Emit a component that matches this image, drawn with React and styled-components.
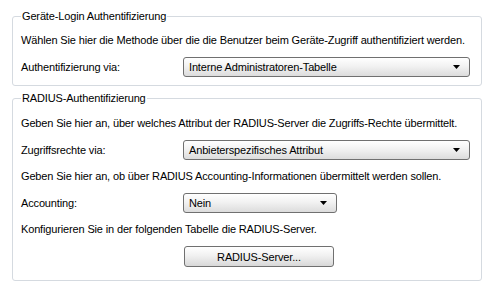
import React from "react";
import styled, { createGlobalStyle } from "styled-components";

const GlobalStyle = createGlobalStyle`
  html, body {
    margin: 0;
    background: #ffffff;
  }
  body {
    font-family: "Liberation Sans", Arial, sans-serif;
    font-size: 11px;
    letter-spacing: -0.15px;
    color: #000000;
  }
`;

const Page = styled.div`
  width: 491px;
  height: 285px;
  box-sizing: border-box;
  padding: 10px 0 0 12px;
  display: flex;
  flex-direction: column;
  gap: 6px;
`;

const Group = styled.fieldset`
  width: 470px;
  box-sizing: border-box;
  margin: 0;
  padding: ${(p) => (p.$tall ? "12px 8px 13px" : "11px 8px 8px")};
  border: 1px solid #d5dae0;
  border-radius: 3px;
  display: flex;
  flex-direction: column;
  gap: 10px;
`;

const Legend = styled.legend`
  padding: 0 1px;
  margin-left: 0;
  line-height: 13px;
`;

const Text = styled.p`
  margin: 0;
  line-height: 13px;
  white-space: nowrap;
`;

const Row = styled.div`
  display: grid;
  grid-template-columns: 162px auto;
  align-items: center;
`;

const Dropdown = styled.div`
  width: ${(p) => p.$width}px;
  height: 20px;
  box-sizing: border-box;
  border: 1px solid #707070;
  border-radius: 3px;
  background: linear-gradient(#ffffff 0%, #f2f2f2 45%, #dcdcdc 100%);
  display: flex;
  align-items: center;
  justify-content: space-between;
  padding: 0 9px 0 5px;
  line-height: 13px;
`;

const Arrow = styled.svg`
  width: 7px;
  height: 4px;
  display: block;
`;

const Button = styled.button`
  width: 150px;
  height: 21px;
  margin-left: 1px;
  box-sizing: border-box;
  border: 1px solid #707070;
  border-radius: 3px;
  background: linear-gradient(#ffffff 0%, #f1f1f1 45%, #d8d8d8 100%);
  font-family: inherit;
  font-size: 11px;
  letter-spacing: inherit;
  color: #000000;
  padding: 0;
`;

const Select = ({ value, width }) => (
  <Dropdown $width={width}>
    <span>{value}</span>
    <Arrow viewBox="0 0 7 4">
      <path d="M0 0 H7 L3.5 4 Z" fill="#000" />
    </Arrow>
  </Dropdown>
);

const App = () => (
  <React.Fragment>
    <GlobalStyle />
    <Page>
      <Group>
        <Legend>Geräte-Login Authentifizierung</Legend>
        <Text>
          Wählen Sie hier die Methode über die die Benutzer beim Geräte-Zugriff
          authentifiziert werden.
        </Text>
        <Row>
          <span>Authentifizierung via:</span>
          <Select value="Interne Administratoren-Tabelle" width={287} />
        </Row>
      </Group>
      <Group $tall>
        <Legend>RADIUS-Authentifizierung</Legend>
        <Text>
          Geben Sie hier an, über welches Attribut der RADIUS-Server die
          Zugriffs-Rechte übermittelt.
        </Text>
        <Row>
          <span>Zugriffsrechte via:</span>
          <Select value="Anbieterspezifisches Attribut" width={287} />
        </Row>
        <Text>
          Geben Sie hier an, ob über RADIUS Accounting-Informationen übermittelt
          werden sollen.
        </Text>
        <Row>
          <span>Accounting:</span>
          <Select value="Nein" width={154} />
        </Row>
        <Text>Konfigurieren Sie in der folgenden Tabelle die RADIUS-Server.</Text>
        <Row>
          <span />
          <Button>RADIUS-Server...</Button>
        </Row>
      </Group>
    </Page>
  </React.Fragment>
);

export default App;
